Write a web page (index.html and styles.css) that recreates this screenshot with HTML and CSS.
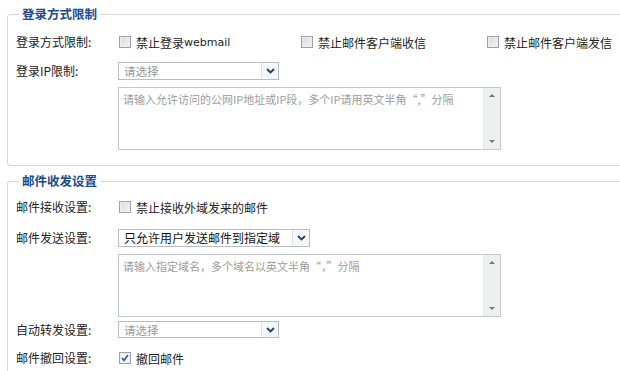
FILE: index.html
```html
<!DOCTYPE html>
<html lang="zh-CN">
<head>
<meta charset="utf-8">
<title>设置</title>
<link rel="stylesheet" href="styles.css">
</head>
<body>
<div class="page">
  <fieldset class="group g1">
    <legend class="legend">登录方式限制</legend>
    <div class="row r-check">
      <span class="label">登录方式限制:</span>
      <div class="opts">
        <span class="opt o1"><span class="cb"></span>禁止登录<span class="latin">webmail</span></span>
        <span class="opt o2"><span class="cb"></span>禁止邮件客户端收信</span>
        <span class="opt"><span class="cb"></span>禁止邮件客户端发信</span>
      </div>
    </div>
    <div class="row r-select">
      <span class="label">登录IP限制:</span>
      <div class="select w161"><span class="sv ph">请选择</span><span class="sa"><svg width="9" height="6" viewBox="0 0 9 6"><path d="M1 1 L4.5 4.5 L8 1" fill="none" stroke="#1d3f73" stroke-width="1.8"/></svg></span></div>
    </div>
    <div class="row r-area">
      <span class="label"></span>
      <div class="area"><span class="at">请输入允许访问的公网IP地址或IP段，多个IP请用英文半角“,”分隔</span><span class="sb"><i class="up"></i><i class="dn"></i></span></div>
    </div>
  </fieldset>

  <fieldset class="group g2">
    <legend class="legend">邮件收发设置</legend>
    <div class="row r-check2">
      <span class="label">邮件接收设置:</span>
      <span class="opt"><span class="cb"></span>禁止接收外域发来的邮件</span>
    </div>
    <div class="row r-select2">
      <span class="label">邮件发送设置:</span>
      <div class="select w192"><span class="sv">只允许用户发送邮件到指定域</span><span class="sa"><svg width="9" height="6" viewBox="0 0 9 6"><path d="M1 1 L4.5 4.5 L8 1" fill="none" stroke="#1d3f73" stroke-width="1.8"/></svg></span></div>
    </div>
    <div class="row r-area2">
      <span class="label"></span>
      <div class="area"><span class="at">请输入指定域名，多个域名以英文半角“，”分隔</span><span class="sb"><i class="up"></i><i class="dn"></i></span></div>
    </div>
    <div class="row r-select3">
      <span class="label">自动转发设置:</span>
      <div class="select w161 h17"><span class="sv ph">请选择</span><span class="sa"><svg width="9" height="6" viewBox="0 0 9 6"><path d="M1 1 L4.5 4.5 L8 1" fill="none" stroke="#1d3f73" stroke-width="1.8"/></svg></span></div>
    </div>
    <div class="row r-check3">
      <span class="label">邮件撤回设置:</span>
      <span class="opt"><span class="cb checked"><svg width="10" height="10" viewBox="0 0 10 10"><path d="M2 5 L4 7.5 L8 2" fill="none" stroke="#2b56a8" stroke-width="1.6"/></svg></span>撤回邮件</span>
    </div>
  </fieldset>
</div>
</body>
</html>
```
FILE: styles.css
```css
* { box-sizing: border-box; }
html, body { margin: 0; padding: 0; background: #fff; }
body { overflow: hidden; width: 620px; height: 371px; }
.page {
  padding: 4px 0 0 7px;
  width: 660px;
  font-family: "Noto Sans CJK SC", "Noto Sans", sans-serif;
  font-size: 12px;
  color: #222;
}
.group {
  margin: 0;
  padding: 0 0 0 8px;
  border: 1px solid #d6d6d6;
  border-radius: 3px;
  width: 640px;
  min-width: 0;
}
.g1 { height: 162px; padding-top: 8px; }
.g2 { margin-top: 5px; height: 210px; padding-top: 6px; }
.legend {
  padding: 0 3px;
  margin-left: 3px;
  font-weight: bold;
  font-size: 12.5px;
  color: #1c4a8a;
  line-height: 20px;
  height: 20px;
}
.row {
  display: grid;
  grid-template-columns: 102px auto;
  align-items: center;
}
.label { color: #222; line-height: 16px; }
.r-check { height: 20px; }
.r-select { margin-top: 10px; height: 18px; }
.r-area { margin-top: 7px; }
.r-check2 { height: 20px; }
.r-select2 { margin-top: 12px; height: 18px; }
.r-area2 { margin-top: 7px; }
.r-select3 { margin-top: 4px; height: 17px; }
.r-check3 { margin-top: 10px; height: 20px; }

.opts { display: flex; align-items: center; }
.opt { display: inline-flex; align-items: center; white-space: nowrap; }
.o1 { width: 182px; }
.o2 { width: 186px; }
.latin { font-family: "DejaVu Sans", "Liberation Sans", sans-serif; font-size: 11px; }
.cb {
  display: inline-flex;
  align-items: center;
  justify-content: center;
  width: 12px;
  height: 12px;
  margin: 0 5px 0 1px;
  border: 1px solid #9ea2a8;
  background: linear-gradient(135deg, #d9dbde 0%, #f3f4f5 100%);
  box-shadow: inset 0 0 0 1px #eceef0;
}
.cb.checked { background: #f5f6f8; }

.select {
  display: flex;
  height: 18px;
  border: 1px solid #b9bdc3;
  background: #fff;
}
.h17 { height: 17px; }
.w161 { width: 161px; }
.w192 { width: 192px; }
.sv { flex: 1; padding-left: 5px; line-height: 16px; color: #111; white-space: nowrap; overflow: hidden; }
.sv.ph { color: #9a9a9a; font-size: 11.5px; }
.sa {
  width: 17px;
  display: flex;
  align-items: center;
  justify-content: center;
  border-left: 1px solid #dcdfe3;
  background: #f6f7f9;
}

.area {
  position: relative;
  width: 383px;
  height: 63px;
  border: 1px solid #c3c6ca;
  background: #fff;
}
.at {
  display: block;
  padding: 3px 0 0 4px;
  font-size: 11px;
  color: #9c9c9c;
  line-height: 16px;
  white-space: nowrap;
}
.sb {
  position: absolute;
  right: 0;
  top: 0;
  bottom: 0;
  width: 17px;
  background: #eeeff1;
  border-left: 1px solid #e6e7e9;
}
.sb .up, .sb .dn {
  position: absolute;
  left: 5px;
  width: 0;
  height: 0;
  border-left: 3px solid transparent;
  border-right: 3px solid transparent;
}
.sb .up { top: 6px; border-bottom: 3px solid #777; }
.sb .dn { bottom: 6px; border-top: 3px solid #777; }
```
